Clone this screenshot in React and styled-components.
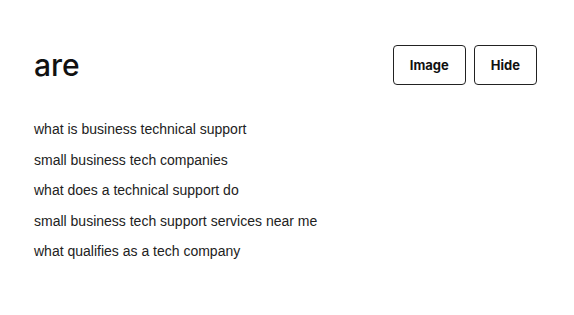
import React from 'react';
import styled, { createGlobalStyle } from 'styled-components';

const suggestions = [
  'what is business technical support',
  'small business tech companies',
  'what does a technical support do',
  'small business tech support services near me',
  'what qualifies as a tech company',
];

function App() {
  return (
    <>
      <GlobalStyle />
      <Panel>
        <Header>
          <Title>are</Title>
          <Actions>
            <Button>Image</Button>
            <Button>Hide</Button>
          </Actions>
        </Header>
        <List>
          {suggestions.map((s) => (
            <Item key={s}>{s}</Item>
          ))}
        </List>
      </Panel>
    </>
  );
}

const GlobalStyle = createGlobalStyle`
  body {
    margin: 0;
    background: #fff;
    font-family: "Liberation Sans", Arial, sans-serif;
  }
`;

const Panel = styled.div`
  padding: 45px 37px 0 34px;
`;

const Header = styled.div`
  display: flex;
  align-items: center;
  justify-content: space-between;
  height: 40px;
`;

const Title = styled.h1`
  margin: 0;
  font-family: Inter, "Liberation Sans", sans-serif;
  font-size: 30px;
  font-weight: 500;
  color: #111;
`;

const Actions = styled.div`
  display: flex;
  gap: 8px;
`;

const Button = styled.button`
  height: 40px;
  padding: 0 16px;
  background: #fff;
  border: 1px solid #222;
  border-radius: 4px;
  font-family: Inter, "Liberation Sans", sans-serif;
  font-size: 13px;
  font-weight: 700;
  color: #111;
  cursor: pointer;
`;

const List = styled.ul`
  list-style: none;
  margin: 29px 0 0;
  padding: 0;
`;

const Item = styled.li`
  font-size: 14px;
  line-height: 30.5px;
  color: #222;
`;

export default App;
